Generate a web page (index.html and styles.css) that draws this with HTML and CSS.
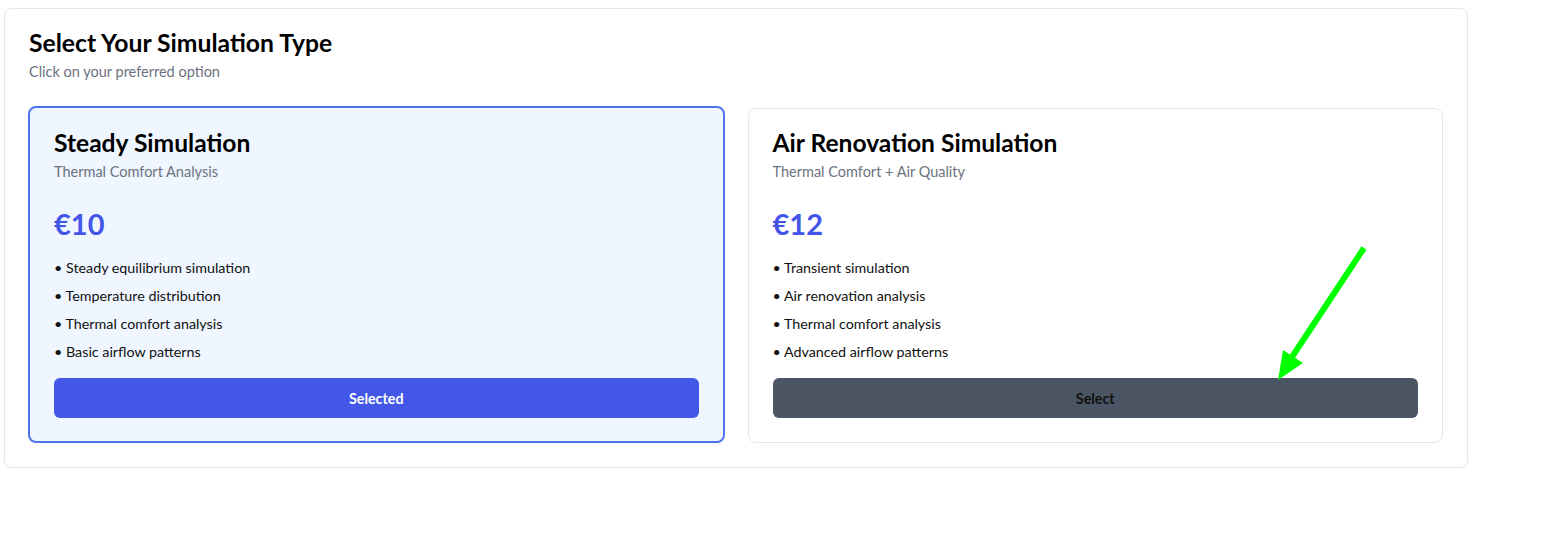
FILE: index.html
```html
<!DOCTYPE html>
<html lang="en">
<head>
<meta charset="utf-8">
<title>Select Your Simulation Type</title>
<link rel="stylesheet" href="styles.css">
</head>
<body>
<div class="panel">
  <h2 class="panel-title">Select Your Simulation Type</h2>
  <p class="panel-sub">Click on your preferred option</p>
  <div class="options">
    <div class="option option-selected">
      <h3 class="option-title">Steady Simulation</h3>
      <p class="option-sub">Thermal Comfort Analysis</p>
      <div class="price">€10</div>
      <ul class="features">
        <li>• Steady equilibrium simulation</li>
        <li>• Temperature distribution</li>
        <li>• Thermal comfort analysis</li>
        <li>• Basic airflow patterns</li>
      </ul>
      <button class="btn btn-selected">Selected</button>
    </div>
    <div class="option">
      <h3 class="option-title">Air Renovation Simulation</h3>
      <p class="option-sub">Thermal Comfort + Air Quality</p>
      <div class="price">€12</div>
      <ul class="features">
        <li>• Transient simulation</li>
        <li>• Air renovation analysis</li>
        <li>• Thermal comfort analysis</li>
        <li>• Advanced airflow patterns</li>
      </ul>
      <button class="btn btn-select">Select</button>
    </div>
  </div>
</div>
<svg class="annotation" width="1549" height="550" viewBox="0 0 1549 550">
  <line x1="1364" y1="248" x2="1292" y2="357" stroke="#00ff00" stroke-width="6"/>
  <polygon points="1283,350 1303,363 1278,380" fill="#00ff00"/>
</svg>
</body>
</html>
```

FILE: styles.css
```css
* { box-sizing: border-box; }
body {
  margin: 0;
  padding: 8px 0 0 4px;
  font-family: "Lato", "Open Sans", sans-serif;
  color: #111827;
  background: #fff;
}
.panel {
  width: 1464px;
  border: 1px solid #e5e7eb;
  border-radius: 8px;
  background: #fff;
  padding: 20px 24px 24px 24px;
  box-shadow: 0 1px 2px rgba(0,0,0,0.04);
}
.panel-title {
  margin: 0;
  font-size: 24.7px;
  line-height: 28px;
  font-weight: 700;
  color: #000;
}
.panel-sub {
  margin: 5px 0 0;
  font-size: 14.5px;
  line-height: 20px;
  color: #6b7280;
}
.options {
  margin-top: 24px;
  display: grid;
  grid-template-columns: 1fr 1fr;
  gap: 23px;
  align-items: start;
}
.option {
  border: 1px solid #e5e7eb;
  border-radius: 8px;
  background: #fff;
  padding: 22px 24px 24px;
  margin-top: 2px;
}
.option-selected {
  border: 2px solid #4f74ea;
  background: #eff6ff;
  margin: 0 0 0 -1px;
  padding: 23px 24px 23px;
}
.option-title {
  margin: 0;
  font-size: 24.6px;
  line-height: 24px;
  font-weight: 700;
  color: #000;
}
.option-sub {
  margin: 7px 0 0;
  font-size: 14.5px;
  line-height: 20px;
  color: #6b7280;
}
.price {
  margin-top: 24px;
  font-size: 29px;
  line-height: 36px;
  font-weight: 700;
  color: #4355e8;
}
.features {
  list-style: none;
  margin: 16px 0 0;
  padding: 0;
}
.features li {
  font-size: 14.3px;
  line-height: 20px;
  color: #111;
  margin-bottom: 8px;
}
.btn {
  display: block;
  width: 100%;
  height: 40px;
  border: 0;
  border-radius: 6px;
  font-family: inherit;
  font-size: 14.3px;
  font-weight: 700;
  margin-top: 16px;
}
.btn-selected {
  background: #4257e8;
  color: #fff;
}
.btn-select {
  background: #4b5563;
  color: #111;
}
.annotation {
  position: absolute;
  left: 0;
  top: 0;
  pointer-events: none;
}
```
